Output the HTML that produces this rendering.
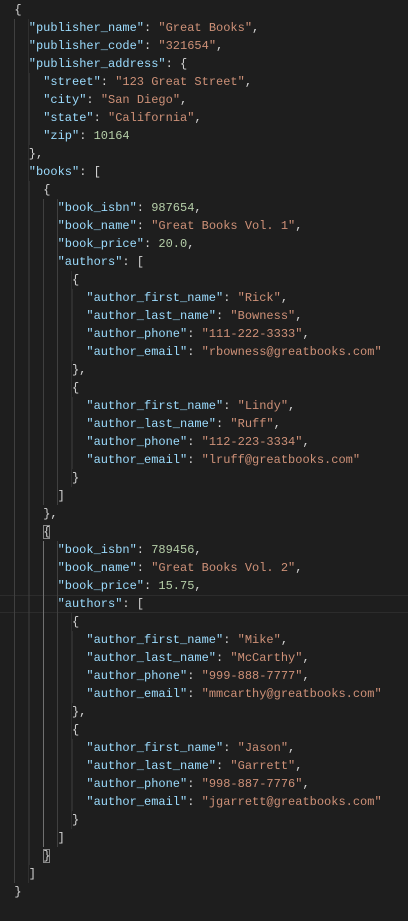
<!DOCTYPE html>
<html><head><meta charset="utf-8"><style>
html,body{margin:0;padding:0;background:#1e1e1e;width:408px;height:921px;overflow:hidden}
#c{position:relative;font-family:"Liberation Mono",monospace;font-size:12px;color:#d4d4d4}
.l{position:absolute;left:0;height:18px;line-height:18px;white-space:pre;padding-left:14.4px;width:400px}
.g{display:inline-block;height:18px;vertical-align:top;background:repeating-linear-gradient(to right,#404040 0 1px,transparent 1px 14.4px)}
.k{color:#9cdcfe}.s{color:#ce9178}.n{color:#b5cea8}
.b{outline:1px solid #888;outline-offset:-1px}
</style></head><body><div id="c">
<div style="position:absolute;left:0;top:595px;width:408px;height:16px;border-top:1px solid #2c2c2c;border-bottom:1px solid #2c2c2c"></div>
<div class="l" style="top:1px">{</div>
<div class="l" style="top:19px"><span class="g" style="width:14.4px"></span><span class="k">"publisher_name"</span>: <span class="s">"Great Books"</span>,</div>
<div class="l" style="top:37px"><span class="g" style="width:14.4px"></span><span class="k">"publisher_code"</span>: <span class="s">"321654"</span>,</div>
<div class="l" style="top:55px"><span class="g" style="width:14.4px"></span><span class="k">"publisher_address"</span>: {</div>
<div class="l" style="top:73px"><span class="g" style="width:28.8px"></span><span class="k">"street"</span>: <span class="s">"123 Great Street"</span>,</div>
<div class="l" style="top:91px"><span class="g" style="width:28.8px"></span><span class="k">"city"</span>: <span class="s">"San Diego"</span>,</div>
<div class="l" style="top:109px"><span class="g" style="width:28.8px"></span><span class="k">"state"</span>: <span class="s">"California"</span>,</div>
<div class="l" style="top:127px"><span class="g" style="width:28.8px"></span><span class="k">"zip"</span>: <span class="n">10164</span></div>
<div class="l" style="top:145px"><span class="g" style="width:14.4px"></span>},</div>
<div class="l" style="top:163px"><span class="g" style="width:14.4px"></span><span class="k">"books"</span>: [</div>
<div class="l" style="top:181px"><span class="g" style="width:28.8px"></span>{</div>
<div class="l" style="top:199px"><span class="g" style="width:43.2px"></span><span class="k">"book_isbn"</span>: <span class="n">987654</span>,</div>
<div class="l" style="top:217px"><span class="g" style="width:43.2px"></span><span class="k">"book_name"</span>: <span class="s">"Great Books Vol. 1"</span>,</div>
<div class="l" style="top:235px"><span class="g" style="width:43.2px"></span><span class="k">"book_price"</span>: <span class="n">20.0</span>,</div>
<div class="l" style="top:253px"><span class="g" style="width:43.2px"></span><span class="k">"authors"</span>: [</div>
<div class="l" style="top:271px"><span class="g" style="width:57.6px"></span>{</div>
<div class="l" style="top:289px"><span class="g" style="width:72px"></span><span class="k">"author_first_name"</span>: <span class="s">"Rick"</span>,</div>
<div class="l" style="top:307px"><span class="g" style="width:72px"></span><span class="k">"author_last_name"</span>: <span class="s">"Bowness"</span>,</div>
<div class="l" style="top:325px"><span class="g" style="width:72px"></span><span class="k">"author_phone"</span>: <span class="s">"111-222-3333"</span>,</div>
<div class="l" style="top:343px"><span class="g" style="width:72px"></span><span class="k">"author_email"</span>: <span class="s">"rbowness@greatbooks.com"</span></div>
<div class="l" style="top:361px"><span class="g" style="width:57.6px"></span>},</div>
<div class="l" style="top:379px"><span class="g" style="width:57.6px"></span>{</div>
<div class="l" style="top:397px"><span class="g" style="width:72px"></span><span class="k">"author_first_name"</span>: <span class="s">"Lindy"</span>,</div>
<div class="l" style="top:415px"><span class="g" style="width:72px"></span><span class="k">"author_last_name"</span>: <span class="s">"Ruff"</span>,</div>
<div class="l" style="top:433px"><span class="g" style="width:72px"></span><span class="k">"author_phone"</span>: <span class="s">"112-223-3334"</span>,</div>
<div class="l" style="top:451px"><span class="g" style="width:72px"></span><span class="k">"author_email"</span>: <span class="s">"lruff@greatbooks.com"</span></div>
<div class="l" style="top:469px"><span class="g" style="width:57.6px"></span>}</div>
<div class="l" style="top:487px"><span class="g" style="width:43.2px"></span>]</div>
<div class="l" style="top:505px"><span class="g" style="width:28.8px"></span>},</div>
<div class="l" style="top:523px"><span class="g" style="width:28.8px"></span><span class="b">{</span></div>
<div class="l" style="top:541px"><span class="g" style="width:43.2px"></span><span class="k">"book_isbn"</span>: <span class="n">789456</span>,</div>
<div class="l" style="top:559px"><span class="g" style="width:43.2px"></span><span class="k">"book_name"</span>: <span class="s">"Great Books Vol. 2"</span>,</div>
<div class="l" style="top:577px"><span class="g" style="width:43.2px"></span><span class="k">"book_price"</span>: <span class="n">15.75</span>,</div>
<div class="l" style="top:595px"><span class="g" style="width:43.2px"></span><span class="k">"authors"</span>: [</div>
<div class="l" style="top:613px"><span class="g" style="width:57.6px"></span>{</div>
<div class="l" style="top:631px"><span class="g" style="width:72px"></span><span class="k">"author_first_name"</span>: <span class="s">"Mike"</span>,</div>
<div class="l" style="top:649px"><span class="g" style="width:72px"></span><span class="k">"author_last_name"</span>: <span class="s">"McCarthy"</span>,</div>
<div class="l" style="top:667px"><span class="g" style="width:72px"></span><span class="k">"author_phone"</span>: <span class="s">"999-888-7777"</span>,</div>
<div class="l" style="top:685px"><span class="g" style="width:72px"></span><span class="k">"author_email"</span>: <span class="s">"mmcarthy@greatbooks.com"</span></div>
<div class="l" style="top:703px"><span class="g" style="width:57.6px"></span>},</div>
<div class="l" style="top:721px"><span class="g" style="width:57.6px"></span>{</div>
<div class="l" style="top:739px"><span class="g" style="width:72px"></span><span class="k">"author_first_name"</span>: <span class="s">"Jason"</span>,</div>
<div class="l" style="top:757px"><span class="g" style="width:72px"></span><span class="k">"author_last_name"</span>: <span class="s">"Garrett"</span>,</div>
<div class="l" style="top:775px"><span class="g" style="width:72px"></span><span class="k">"author_phone"</span>: <span class="s">"998-887-7776"</span>,</div>
<div class="l" style="top:793px"><span class="g" style="width:72px"></span><span class="k">"author_email"</span>: <span class="s">"jgarrett@greatbooks.com"</span></div>
<div class="l" style="top:811px"><span class="g" style="width:57.6px"></span>}</div>
<div class="l" style="top:829px"><span class="g" style="width:43.2px"></span>]</div>
<div class="l" style="top:847px"><span class="g" style="width:28.8px"></span><span class="b">}</span></div>
<div class="l" style="top:865px"><span class="g" style="width:14.4px"></span>]</div>
<div class="l" style="top:883px">}</div>
<div style="position:absolute;left:43.2px;top:541px;width:1px;height:306px;background:#707070"></div>
</div></body></html>
